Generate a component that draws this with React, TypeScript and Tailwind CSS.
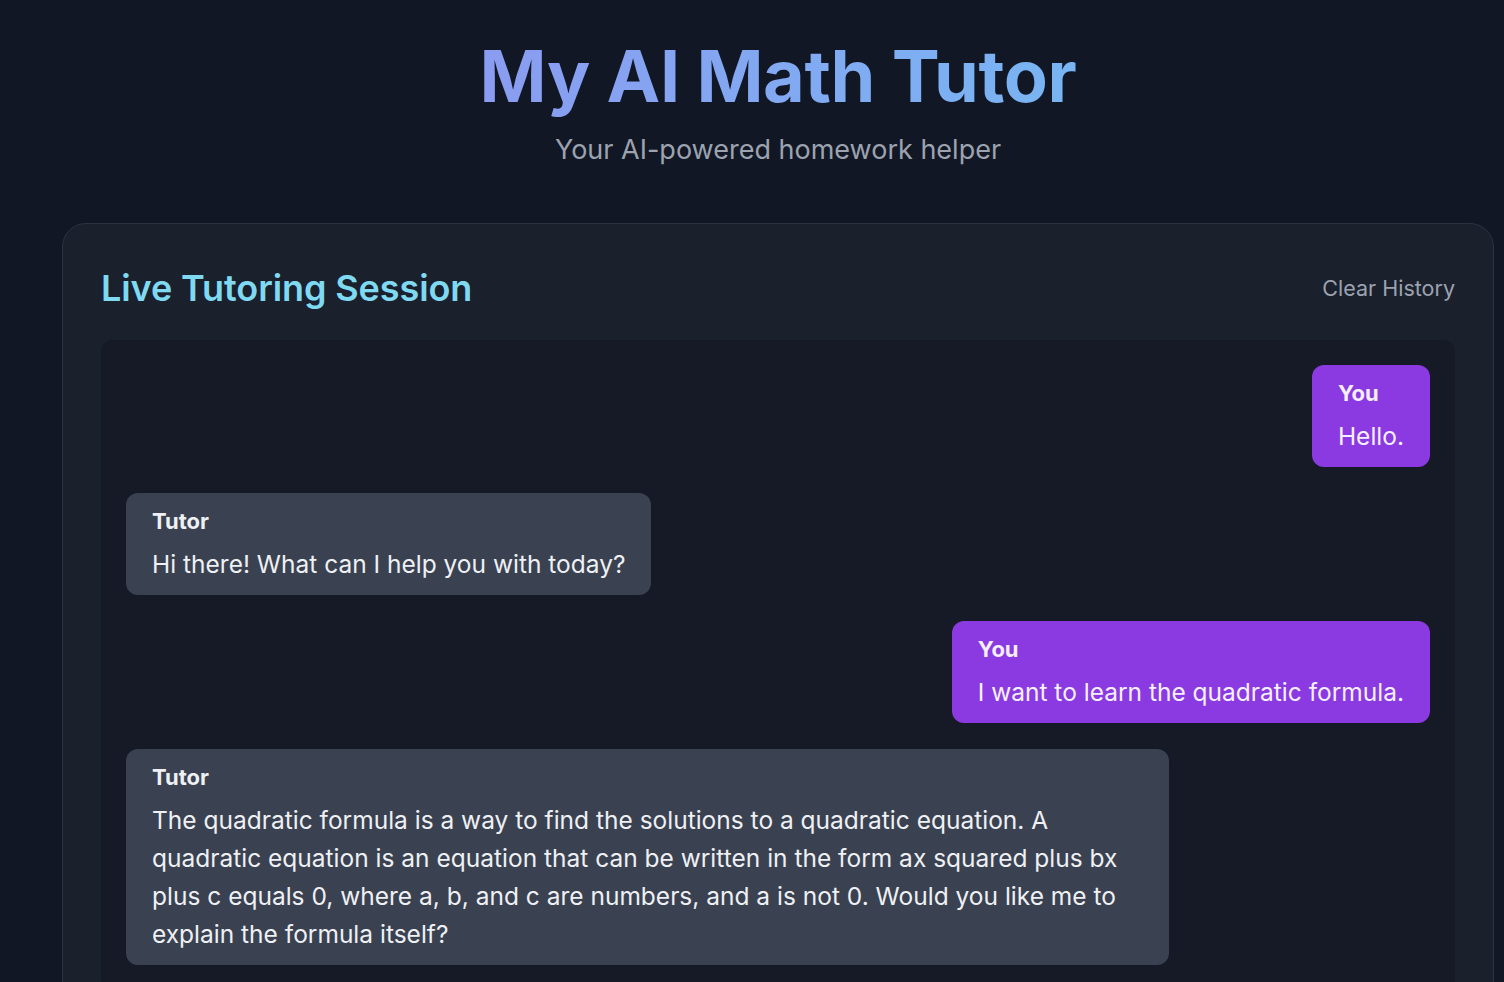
import React from "react";

type Msg = { role: "you" | "tutor"; text: string };

const messages: Msg[] = [
  { role: "you", text: "Hello." },
  { role: "tutor", text: "Hi there! What can I help you with today?" },
  { role: "you", text: "I want to learn the quadratic formula." },
  {
    role: "tutor",
    text: "The quadratic formula is a way to find the solutions to a quadratic equation. A quadratic equation is an equation that can be written in the form ax squared plus bx plus c equals 0, where a, b, and c are numbers, and a is not 0. Would you like me to explain the formula itself?",
  },
];

function Bubble({ m }: { m: Msg }) {
  const you = m.role === "you";
  return (
    <div className={you ? "flex justify-end" : "flex justify-start"}>
      <div
        className={
          (you ? "bg-[#8a3ae0] text-[#f5efff]" : "bg-[#3a4151] text-[#eef0f3]") +
          " max-w-[80%] rounded-[12px] px-[26px] pt-[14px] pb-[12px]"
        }
      >
        <div className="text-[22px] leading-[28px] font-bold">{you ? "You" : "Tutor"}</div>
        <div className="mt-[10px] text-[24.5px] leading-[38px]">{m.text}</div>
      </div>
    </div>
  );
}

export default function App() {
  return (
    <div
      className="min-h-screen bg-[#121725] pl-[62px] pr-[10px] pb-10"
      style={{ fontFamily: "Inter, 'Noto Sans', sans-serif" }}
    >
      <header className="flex flex-col items-center pt-[33px]">
        <h1 className="bg-gradient-to-r from-[#8a9cf1] to-[#78b5f2] bg-clip-text text-[72px] leading-[1.2] font-bold tracking-[-0.4px] text-transparent">
          My AI Math Tutor
        </h1>
        <p className="mt-[13px] text-[27px] leading-[36px] text-[#9ca3af]">Your AI-powered homework helper</p>
      </header>

      <section className="mt-[55px] rounded-[24px] border border-[#2c3241] bg-[#1b202d] px-[38px] pt-[40px] pb-10">
        <div className="flex items-center justify-between">
          <h2 className="text-[36px] leading-[48px] font-semibold tracking-[-0.1px] text-[#7fd9f1]">
            Live Tutoring Session
          </h2>
          <button className="text-[21.5px] leading-[28px] text-[#9ca3af]">Clear History</button>
        </div>
        <div className="mt-[28px] flex flex-col gap-[26px] rounded-[12px] bg-[#161a26] p-[25px]">
          {messages.map((m, i) => (
            <Bubble key={i} m={m} />
          ))}
        </div>
      </section>
    </div>
  );
}
